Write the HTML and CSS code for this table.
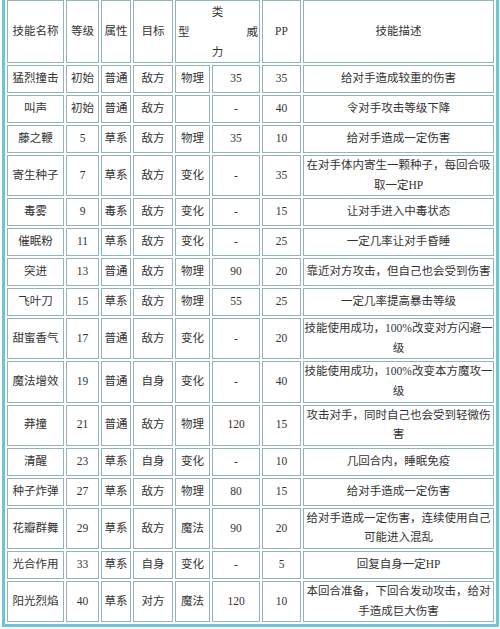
FILE: index.html
```html
<!DOCTYPE html>
<html lang="zh">
<head>
<meta charset="utf-8">
<title>技能表</title>
<link rel="stylesheet" href="styles.css">
</head>
<body>
<div class="frame">
<table class="skills">
<colgroup>
<col class="c1"><col class="c2"><col class="c3"><col class="c4"><col class="c5"><col class="c6"><col class="c7"><col class="c8">
</colgroup>
<tr class="head">
<td>技能名称</td><td>等级</td><td>属性</td><td>目标</td>
<td colspan="2" class="type-power"><div class="tp-line tp-center">类</div><div class="tp-line tp-split"><span>型</span><span>威</span></div><div class="tp-line tp-center">力</div></td>
<td>PP</td><td>技能描述</td>
</tr>
<tr><td>猛烈撞击</td><td>初始</td><td>普通</td><td>敌方</td><td>物理</td><td>35</td><td>35</td><td>给对手造成较重的伤害</td></tr>
<tr><td>叫声</td><td>初始</td><td>普通</td><td>敌方</td><td></td><td>-</td><td>40</td><td>令对手攻击等级下降</td></tr>
<tr><td>藤之鞭</td><td>5</td><td>草系</td><td>敌方</td><td>物理</td><td>35</td><td>10</td><td>给对手造成一定伤害</td></tr>
<tr><td>寄生种子</td><td>7</td><td>草系</td><td>敌方</td><td>变化</td><td>-</td><td>35</td><td>在对手体内寄生一颗种子，每回合吸取一定HP</td></tr>
<tr><td>毒雾</td><td>9</td><td>毒系</td><td>敌方</td><td>变化</td><td>-</td><td>15</td><td>让对手进入中毒状态</td></tr>
<tr><td>催眠粉</td><td>11</td><td>草系</td><td>敌方</td><td>变化</td><td>-</td><td>25</td><td>一定几率让对手昏睡</td></tr>
<tr><td>突进</td><td>13</td><td>普通</td><td>敌方</td><td>物理</td><td>90</td><td>20</td><td>靠近对方攻击，但自己也会受到伤害</td></tr>
<tr><td>飞叶刀</td><td>15</td><td>草系</td><td>敌方</td><td>物理</td><td>55</td><td>25</td><td>一定几率提高暴击等级</td></tr>
<tr><td>甜蜜香气</td><td>17</td><td>普通</td><td>敌方</td><td>变化</td><td>-</td><td>20</td><td>技能使用成功，100%改变对方闪避一级</td></tr>
<tr><td>魔法增效</td><td>19</td><td>普通</td><td>自身</td><td>变化</td><td>-</td><td>40</td><td>技能使用成功，100%改变本方魔攻一级</td></tr>
<tr><td>莽撞</td><td>21</td><td>普通</td><td>敌方</td><td>物理</td><td>120</td><td>15</td><td>攻击对手，同时自己也会受到轻微伤害</td></tr>
<tr><td>清醒</td><td>23</td><td>草系</td><td>自身</td><td>变化</td><td>-</td><td>10</td><td>几回合内，睡眠免疫</td></tr>
<tr><td>种子炸弹</td><td>27</td><td>草系</td><td>敌方</td><td>物理</td><td>80</td><td>15</td><td>给对手造成一定伤害</td></tr>
<tr><td>花瓣群舞</td><td>29</td><td>草系</td><td>敌方</td><td>魔法</td><td>90</td><td>20</td><td>给对手造成一定伤害，连续使用自己可能进入混乱</td></tr>
<tr><td>光合作用</td><td>33</td><td>草系</td><td>自身</td><td>变化</td><td>-</td><td>5</td><td>回复自身一定HP</td></tr>
<tr><td>阳光烈焰</td><td>40</td><td>草系</td><td>对方</td><td>魔法</td><td>120</td><td>10</td><td>本回合准备，下回合发动攻击，给对手造成巨大伤害</td></tr>
</table>
</div>
</body>
</html>
```

FILE: styles.css
```css
html, body {
  margin: 0;
  padding: 0;
  background: #ffffff;
}

body {
  font-family: "Liberation Serif", "Noto Sans CJK SC", serif;
  font-size: 11.5px;
  color: #333333;
  overflow: hidden;
}

.frame {
  margin: -2px 0 0 2px;
  width: 491px;
  border: 3px solid #6cc6da;
  border-top: 0;
}

.skills {
  border-collapse: separate;
  border-spacing: 2px;
  table-layout: fixed;
  width: 491px;
}

.c1 { width: 57px; }
.c2 { width: 33px; }
.c3 { width: 30px; }
.c4 { width: 40px; }
.c5 { width: 35px; }
.c6 { width: 48px; }
.c7 { width: 39px; }
.c8 { width: 191px; }

.skills td {
  border: 1px solid #93b3ba;
  padding: 0;
  text-align: center;
  vertical-align: middle;
  line-height: 19.6px;
  height: 26px;
  white-space: normal;
  word-break: break-all;
}

.skills .head td {
  height: 61px;
}

.type-power .tp-line {
  height: 20px;
  line-height: 20px;
}

.tp-center {
  text-align: center;
}

.tp-split {
  display: flex;
  justify-content: space-between;
  padding: 0 1px 0 2px;
}
```
